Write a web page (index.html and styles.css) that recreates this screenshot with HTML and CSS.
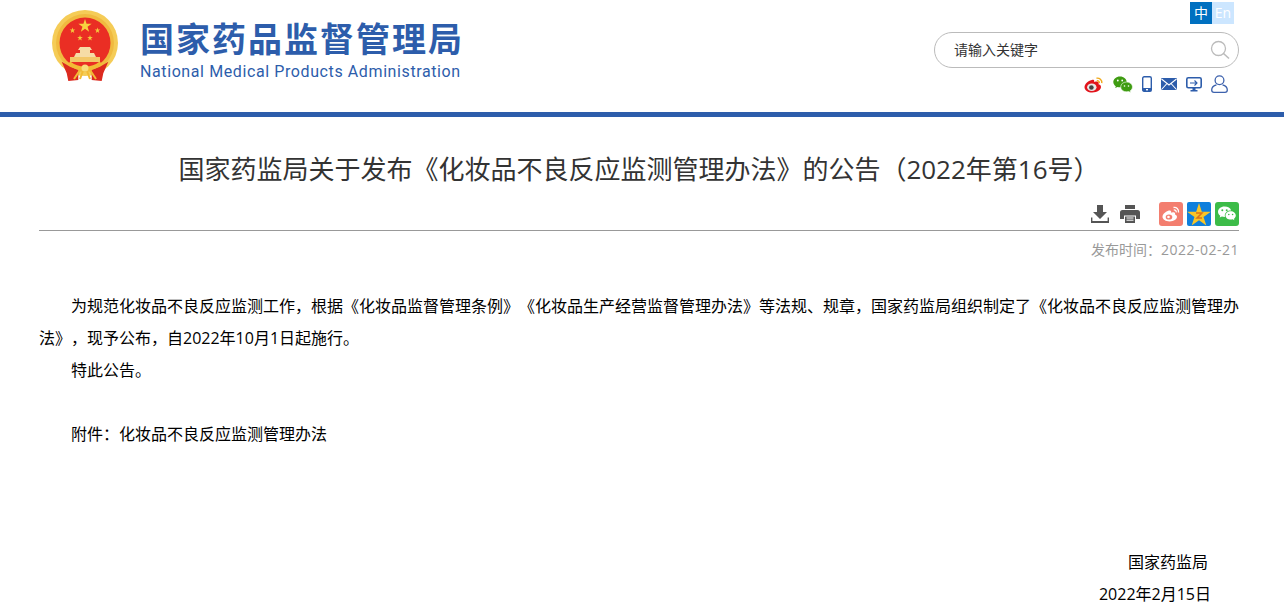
FILE: index.html
```html
<!DOCTYPE html>
<html lang="zh-CN">
<head>
<meta charset="utf-8">
<title>国家药监局关于发布《化妆品不良反应监测管理办法》的公告（2022年第16号）</title>
<link rel="stylesheet" href="styles.css">
</head>
<body>
<svg class="defs" width="0" height="0" aria-hidden="true"><defs><polygon id="star" points="0,-1 .225,-.309 .951,-.309 .363,.118 .588,.809 0,.382 -.588,.809 -.363,.118 -.951,-.309 -.225,-.309"/></defs></svg>
<header class="header">
  <div class="brand">
    <svg class="emblem" viewBox="0 0 70 72" width="70" height="72">
      <circle cx="35" cy="34" r="33" fill="#f5cc57"/>
      <circle cx="35" cy="34" r="29" fill="#f0ba40"/>
      <circle cx="35" cy="34" r="25.500" fill="#ea2e24"/>
      <use href="#star" transform="translate(35 17) scale(7)" fill="#f7d23f"/>
      <use href="#star" transform="translate(22.500 21.500) scale(3)" fill="#f5c93c"/>
      <use href="#star" transform="translate(47.500 21.500) scale(3)" fill="#f5c93c"/>
      <use href="#star" transform="translate(30 29) scale(3)" fill="#f5c93c"/>
      <use href="#star" transform="translate(40 29) scale(3)" fill="#f5c93c"/>
      <path d="M30 38h10l2 3h-2v3h4l2 4H24l2-4h4v-3h-2z" fill="#f6dca6"/>
      <path d="M20 48h30v5H20z" fill="#f3c768"/>
      <path d="M11.700 52.700L20 57.700 28.300 61V71L18.300 72 16.700 64.300zM58.300 52.700L50 57.700 41.700 61V71L51.700 72 53.300 64.300z" fill="#dc2a1f"/>
      <path d="M19 54c5 4 10 5.500 16 5.500S46 58 51 54" fill="none" stroke="#f2bb35" stroke-width="4"/>
      <path d="M30 61l-6 9M40 61l6 9M33 62l-3 8M37 62l3 8" fill="none" stroke="#f2bb35" stroke-width="2"/>
      <circle cx="35" cy="59" r="3.500" fill="#f8dc7a"/>
    </svg>
    <div class="brand-text">
      <div class="brand-cn">国家药品监督管理局</div>
      <div class="brand-en">National Medical Products Administration</div>
    </div>
  </div>
  <div class="tools">
    <div class="lang"><span class="lang-cn">中</span><span class="lang-en">En</span></div>
    <div class="search">
      <span class="search-text">请输入关键字</span>
      <svg class="search-icon" viewBox="0 0 20 20" width="20" height="20"><circle cx="8.500" cy="8.500" r="7" fill="none" stroke="#bbb" stroke-width="1.300"/><path d="M13.500 13.500l5.500 5" stroke="#bbb" stroke-width="1.600" fill="none"/></svg>
    </div>
    <div class="links">
      <svg class="i-weibo" viewBox="0 0 20 17" width="20" height="17"><path d="M8.500 3.800C4.500 4.600.5 8 .5 11.200c0 3 3.400 5.300 7.800 5.300 5 0 8.700-2.800 8.700-5.500 0-1.700-1.500-2.400-2.500-2.700.6-1.600.2-2.800-1.800-2.800-1.200 0-2.500.6-2.500.6s.6-2.600-1.700-2.300z" fill="#e2141c"/><ellipse cx="7.800" cy="11.300" rx="4.700" ry="3.800" fill="#e8e8e8"/><circle cx="7.400" cy="11.500" r="2.300" fill="#444"/><path d="M12.500 2.200c3-.5 5.700 1.700 5.300 5M12.800 4.700c1.500-.2 2.800.8 2.500 2.400" fill="none" stroke="#f0a91b" stroke-width="1.400"/></svg>
      <svg class="i-wechat" viewBox="0 0 20 17" width="20" height="17"><path d="M7 .5C3.200.5.300 3 .3 6c0 1.700 1 3.200 2.500 4.300L2.200 12l2.300-1.100c.8.200 1.600.4 2.500.4 3.800 0 6.700-2.400 6.700-5.300S10.800.5 7 .5z" fill="#3f9c12"/><path d="M13.500 6c-3.200 0-5.800 2.100-5.800 4.900s2.600 4.900 5.800 4.900c.7 0 1.300-.1 2-.3l2.200 1-.5-1.700c1.300-.9 2.300-2.300 2.300-3.900C19.500 8.100 16.700 6 13.500 6z" fill="#3f9c12" stroke="#fff" stroke-width=".6"/><circle cx="4.800" cy="4.500" r=".9" fill="#fff"/><circle cx="9.200" cy="4.500" r=".9" fill="#fff"/><circle cx="11.500" cy="10" r=".8" fill="#fff"/><circle cx="15.500" cy="10" r=".8" fill="#fff"/></svg>
      <svg class="i-phone" viewBox="0 0 10 16" width="10" height="16"><rect x=".7" y=".7" width="8.600" height="14.600" rx="1.500" fill="none" stroke="#2d5dab" stroke-width="1.400"/><rect x=".7" y="12" width="8.600" height="3.300" fill="#2d5dab"/><rect x="4" y="13" width="2" height="1.400" fill="#fff"/></svg>
      <svg class="i-mail" viewBox="0 0 16 12" width="16" height="12"><rect width="16" height="12" rx="1" fill="#2d5dab"/><path d="M.5 1l7.500 6 7.500-6M.5 11.500l5.500-6M15.500 11.500l-5.500-6" fill="none" stroke="#fff" stroke-width="1.100"/></svg>
      <svg class="i-monitor" viewBox="0 0 16 15" width="16" height="15"><rect x=".8" y=".8" width="14.400" height="10" rx="1.500" fill="none" stroke="#2d5dab" stroke-width="1.600"/><path d="M4 6h7M8.500 3.500L11 6 8.500 8.500" fill="none" stroke="#2d5dab" stroke-width="1.100"/><path d="M6.500 11h3v2h2v1.500h-7V13h2z" fill="#2d5dab"/></svg>
      <svg class="i-user" viewBox="0 0 17 18" width="17" height="18"><circle cx="8.500" cy="5.300" r="4.400" fill="none" stroke="#3d62ad" stroke-width="1.300"/><path d="M5.500 9.800C2.500 10.500.7 12.500.7 15c0 1.500.8 2.300 2.300 2.300h11c1.500 0 2.300-.8 2.300-2.300 0-2.500-1.800-4.500-4.800-5.200" fill="none" stroke="#3d62ad" stroke-width="1.300"/></svg>
    </div>
  </div>
</header>
<main class="article">
  <h1 class="title">国家药监局关于发布《化妆品不良反应监测管理办法》的公告（2022年第16号）</h1>
  <div class="actions">
    <svg class="a-down" viewBox="0 0 18 18" width="18" height="18"><path d="M6 0h6v7h4l-7 7-7-7h4z" fill="#555"/><path d="M.5 12.500v4.500h17v-4.500" fill="none" stroke="#555" stroke-width="1.800"/></svg>
    <svg class="a-print" viewBox="0 0 20 18" width="20" height="18"><path d="M5 0h10v4H5z" fill="#555"/><path d="M2.500 5h15A2.500 2.500 0 0 1 20 7.500V14h-4v-3.500H4V14H0V7.500A2.500 2.500 0 0 1 2.500 5z" fill="#555"/><path d="M5 11.500h10V18H5z" fill="#555"/><path d="M6.500 13h7M6.500 15.200h7" stroke="#fff" stroke-width="1"/></svg>
    <svg class="a-share" viewBox="0 0 24 24" width="24" height="24"><rect width="24" height="24" rx="3" fill="#f37e6f"/><path d="M9.800 8.500C6.800 9.500 3.500 12 3.500 14.800c0 2.600 3.300 4.700 7 4.700 4.500 0 7.500-2.500 7.500-4.700 0-1.400-1.200-2-2.100-2.300.5-1.300.2-2.300-1.400-2.300-1 0-2.200.6-2.200.6s.5-2.600-2.500-2.300z" fill="#fff"/><ellipse cx="10" cy="15" rx="3.300" ry="2.600" fill="#f37e6f"/><circle cx="9.500" cy="15" r="1.300" fill="#fff"/><path d="M14.500 5.500c2.800-.5 5.500 1.500 5 5M14.800 8c1.400-.2 2.700.8 2.400 2.300" fill="none" stroke="#fff" stroke-width="1.300"/></svg>
    <svg class="a-share" viewBox="0 0 24 24" width="24" height="24"><rect width="24" height="24" rx="2" fill="#0f7fdc"/><use href="#star" transform="translate(12 13.500) scale(12.500)" fill="#f9c527"/><path d="M9 11h6l-5 5h5" fill="none" stroke="#d9731a" stroke-width="1.500"/></svg>
    <svg class="a-share" viewBox="0 0 24 24" width="24" height="24"><rect width="24" height="24" rx="3" fill="#3cbc48"/><path d="M9.500 4.500C5.700 4.500 3 7 3 9.800c0 1.600.9 3 2.300 4l-.6 1.800 2.200-1.100c.8.200 1.700.4 2.600.4h.5c-.2-.5-.2-1-.2-1.400 0-2.900 2.800-5 6-5h.4c-.7-2.500-3.300-4-6.700-4z" fill="#fff"/><path d="M15.800 9.200c-3 0-5.300 2-5.300 4.200s2.300 4.200 5.300 4.200c.6 0 1.200-.1 1.800-.3l1.800.9-.5-1.500c1.100-.8 1.900-2 1.900-3.300 0-2.200-2.300-4.200-5-4.200z" fill="#fff"/><circle cx="7.300" cy="8.300" r="1" fill="#3cbc48"/><circle cx="11.700" cy="8.300" r="1" fill="#3cbc48"/><circle cx="13.800" cy="12.500" r=".8" fill="#3cbc48"/><circle cx="17.600" cy="12.500" r=".8" fill="#3cbc48"/></svg>
  </div>
  <div class="meta">发布时间：<span class="meta-date">2022-02-21</span></div>
  <div class="body">
    <p class="indent">为规范化妆品不良反应监测工作，根据《化妆品监督管理条例》《化妆品生产经营监督管理办法》等法规、规章，国家药监局组织制定了《化妆品不良反应监测管理办法》，现予公布，自2022年10月1日起施行。</p>
    <p class="indent">特此公告。</p>
    <p class="indent attach">附件：化妆品不良反应监测管理办法</p>
    <p class="sign sign-org">国家药监局</p>
    <p class="sign sign-date">2022年2月15日</p>
  </div>
</main>
</body>
</html>
```
FILE: styles.css
```css
* { box-sizing: border-box; }
html, body { margin: 0; padding: 0; }
body {
  background: #fff;
  color: #000;
  font-family: "Open Sans", "Noto Sans CJK SC", "Liberation Sans", sans-serif;
  text-spacing-trim: space-all;
  font-feature-settings: "chws" 0, "palt" 0;
}
.defs { position: absolute; }
.header {
  height: 117px;
  border-bottom: 5px solid #2d5dab;
  display: flex;
  justify-content: space-between;
  padding: 0 45px 0 50px;
}
.brand { display: flex; align-items: flex-start; padding-top: 9px; }
.emblem { display: block; }
.brand-text { margin-left: 20px; padding-top: 7px; }
.brand-cn {
  font-family: "Noto Sans CJK SC", sans-serif;
  font-size: 34px;
  line-height: 44px;
  font-weight: 700;
  letter-spacing: 2px;
  color: #2d5dab;
  white-space: nowrap;
}
.brand-en {
  font-family: "Roboto", "Liberation Sans", sans-serif;
  font-size: 16px;
  line-height: 20px;
  letter-spacing: .600px;
  color: #2d5dab;
  white-space: nowrap;
  margin-top: 2px;
}
.tools { width: 305px; display: flex; flex-direction: column; align-items: flex-end; padding-top: 2px; }
.lang { display: flex; margin-right: 5px; font-size: 14px; line-height: 22px; color: #fff; text-align: center; }
.lang-cn { width: 22px; background: #0070c0; }
.lang-en { width: 22px; background: #cce6ff; }
.search {
  width: 305px;
  height: 36px;
  margin-top: 8px;
  border: 1px solid #bbb;
  border-radius: 18px;
  display: flex;
  align-items: center;
  justify-content: space-between;
  padding: 0 8px 0 19px;
}
.search-text { font-size: 14px; line-height: 32px; color: #333; }
.links { display: flex; align-items: center; gap: 9px; margin-top: 7px; margin-right: 11px; height: 18px; }
.links svg { display: block; flex: none; }
.article { width: 1200px; margin-left: 39px; }
.title {
  margin: 34px 0 0;
  font-size: 26px;
  line-height: 36px;
  font-weight: 400;
  color: #333;
  text-align: center;
}
.actions {
  display: flex;
  align-items: flex-start;
  justify-content: flex-end;
  height: 35px;
  margin-top: 9px;
  border-bottom: 1px solid #999;
  padding-top: 6px;
  gap: 4px;
}
.actions svg { display: block; flex: none; }
.a-down { margin-top: 3px; margin-right: 7px; }
.a-print { margin-top: 3px; margin-right: 15px; }
.meta {
  margin-top: 9px;
  font-size: 14px;
  line-height: 20px;
  color: #999;
  text-align: right;
}
.meta-date { letter-spacing: .500px; }
.body { margin-top: 30px; font-size: 16px; line-height: 32px; }
.body p { margin: 0; }
.indent { text-indent: 32px; }
.attach { margin-top: 32px !important; }
.sign { text-align: right; }
.sign-org { margin-top: 96px !important; padding-right: 31px; }
.sign-date { padding-right: 28px; }
```
